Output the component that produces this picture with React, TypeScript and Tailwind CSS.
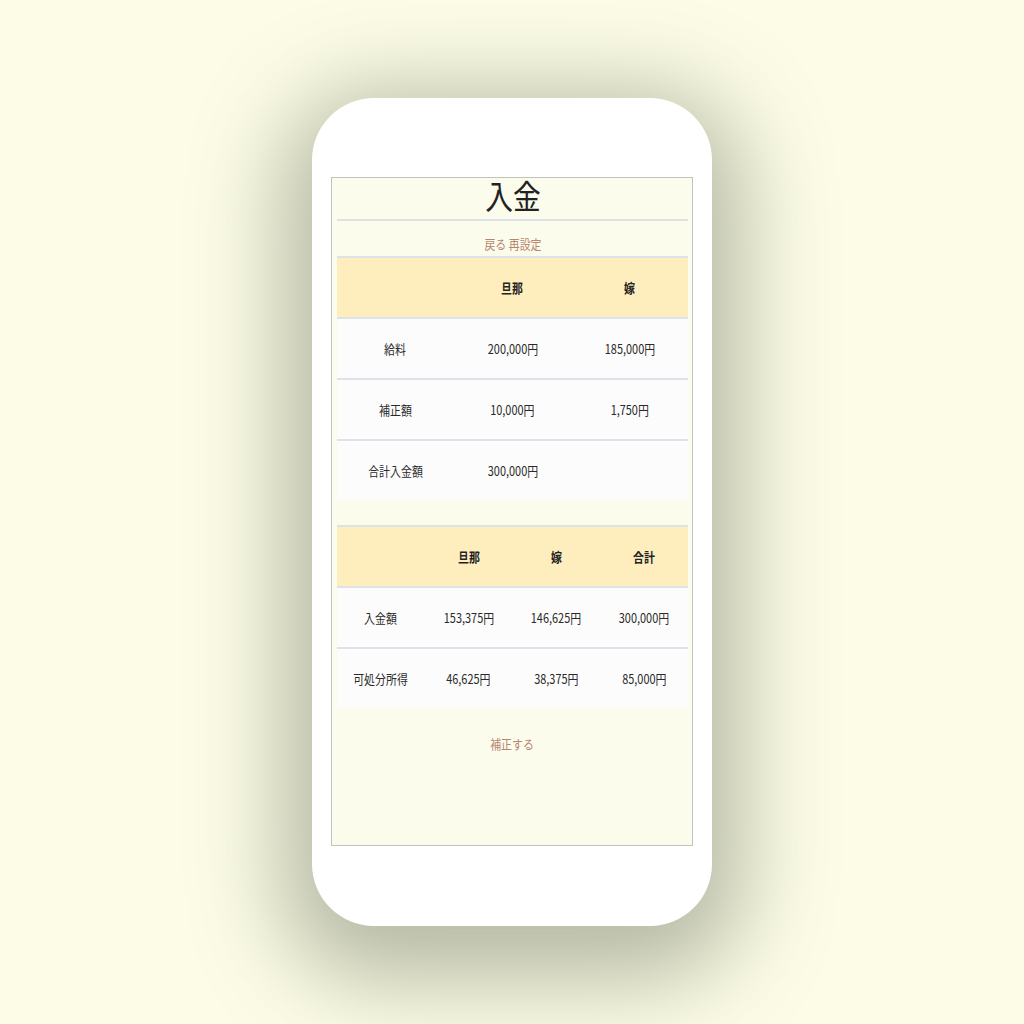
import React from "react";

const font = { fontFamily: '"Noto Sans CJK JP", "Noto Sans", sans-serif' };

function T({ children, className = "" }: { children: React.ReactNode; className?: string }) {
  return <span className={`inline-block scale-x-[0.84] whitespace-nowrap ${className}`}>{children}</span>;
}

function Row({ cells, cols, header = false }: { cells: string[]; cols: 3 | 4; header?: boolean }) {
  return (
    <div
      className={`grid ${cols === 3 ? "grid-cols-3" : "grid-cols-4"} h-[61px] items-center text-center border-t-2 border-[#dde2e8] ${
        header ? "bg-[#feeebe] font-bold text-[#222]" : "bg-[#fcfcfc] text-[#2a2a2a]"
      } text-[13px]`}
    >
      {cells.map((c, i) => (
        <div key={i}>
          <T>{c}</T>
        </div>
      ))}
    </div>
  );
}

export default function App() {
  return (
    <div className="w-full h-[1024px] bg-[#fdfde7] flex items-center justify-center" style={font}>
      <div className="w-[400px] h-[828px] bg-white rounded-[62px] shadow-[0_24px_90px_30px_rgba(75,85,65,0.4)] flex flex-col pt-[79px] pb-[80px] pl-[19px] pr-[19px]">
        <div className="flex-1 border border-[#c2c2bc] bg-[#fbfcec] pl-[5px] pr-[4px] flex flex-col">
          <div className="h-[43px] flex items-center justify-center border-b-2 border-[#dde2e8]">
            <T className="text-[33px] leading-none text-[#222] mb-[6px]">入金</T>
          </div>
          <div className="h-[35px] flex items-end justify-center pb-[3px] text-[13px] text-[#b98470]">
            <T>戻る 再設定</T>
          </div>
          <div>
            <Row cols={3} header cells={["", "旦那", "嫁"]} />
            <Row cols={3} cells={["給料", "200,000円", "185,000円"]} />
            <Row cols={3} cells={["補正額", "10,000円", "1,750円"]} />
            <Row cols={3} cells={["合計入金額", "300,000円", ""]} />
          </div>
          <div className="h-[25px]" />
          <div>
            <Row cols={4} header cells={["", "旦那", "嫁", "合計"]} />
            <Row cols={4} cells={["入金額", "153,375円", "146,625円", "300,000円"]} />
            <Row cols={4} cells={["可処分所得", "46,625円", "38,375円", "85,000円"]} />
          </div>
          <div className="h-[72px] flex items-center justify-center text-[13px] text-[#b98470]">
            <T>補正する</T>
          </div>
        </div>
      </div>
    </div>
  );
}
